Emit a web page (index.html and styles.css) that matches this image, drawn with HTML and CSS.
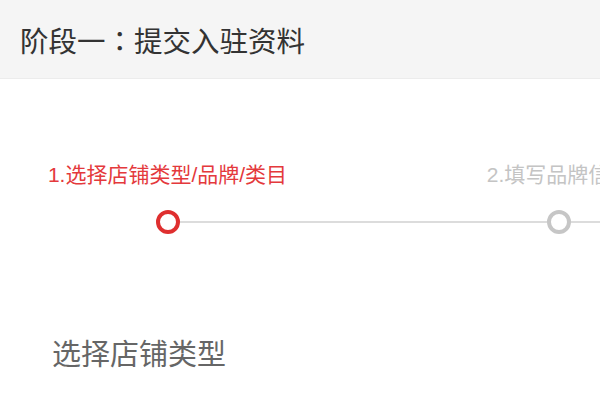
FILE: index.html
```html
<!DOCTYPE html>
<html lang="zh-CN">
<head>
<meta charset="utf-8">
<link rel="stylesheet" href="styles.css">
</head>
<body>
<div class="page">
  <header class="header">阶段一<span class="colon">：</span>提交入驻资料</header>
  <div class="steps">
    <div class="step active first">
      <div class="step-label">1.选择店铺类型/品牌/类目</div>
      <div class="step-track"><span class="line"></span><span class="dot"></span><span class="line"></span></div>
    </div>
    <div class="step">
      <div class="step-label">2.填写品牌信息</div>
      <div class="step-track"><span class="line"></span><span class="dot"></span><span class="line"></span></div>
    </div>
    <div class="step">
      <div class="step-label">3.填写资质信息</div>
      <div class="step-track"><span class="line"></span><span class="dot"></span><span class="line"></span></div>
    </div>
  </div>
  <h2 class="section-title">选择店铺类型</h2>
</div>
</body>
</html>
```
FILE: styles.css
```css
html, body {
  margin: 0;
  padding: 0;
  background: #fff;
}
body {
  width: 600px;
  height: 400px;
  overflow: hidden;
  font-family: "Liberation Sans", "Noto Sans CJK SC", sans-serif;
}
.page {
  width: 600px;
  overflow: hidden;
}
.header {
  height: 78px;
  display: flex;
  align-items: center;
  padding-left: 20px;
  background: #f5f5f5;
  border-bottom: 1px solid #ececec;
  font-size: 28.5px;
  color: #333;
  font-family: "Noto Sans CJK SC", sans-serif;
}
.colon {
  font-family: "Noto Sans CJK TC", sans-serif;
}
.steps {
  display: grid;
  grid-template-columns: repeat(3, 391px);
  margin-left: -28px;
  padding-top: 82px;
}
.step {
  display: flex;
  flex-direction: column;
  align-items: center;
}
.step-label {
  font-size: 21px;
  line-height: 28px;
  color: #c4c4c4;
  white-space: nowrap;
}
.step.active .step-label {
  color: #e4393c;
}
.step-track {
  margin-top: 21px;
  width: 100%;
  height: 24px;
  display: flex;
  align-items: center;
}
.line {
  flex: 1;
  height: 2px;
  background: #dcdcdc;
}
.step.first .line:first-child {
  background: transparent;
}
.dot {
  width: 16px;
  height: 16px;
  border: 4px solid #c6c6c6;
  border-radius: 50%;
  background: #fff;
}
.step.active .dot {
  border-color: #df2f2f;
}
.section-title {
  margin: 98px 0 0 52px;
  font-size: 29px;
  line-height: 40px;
  font-weight: normal;
  color: #666;
  font-family: "Noto Sans CJK SC", sans-serif;
}
```
